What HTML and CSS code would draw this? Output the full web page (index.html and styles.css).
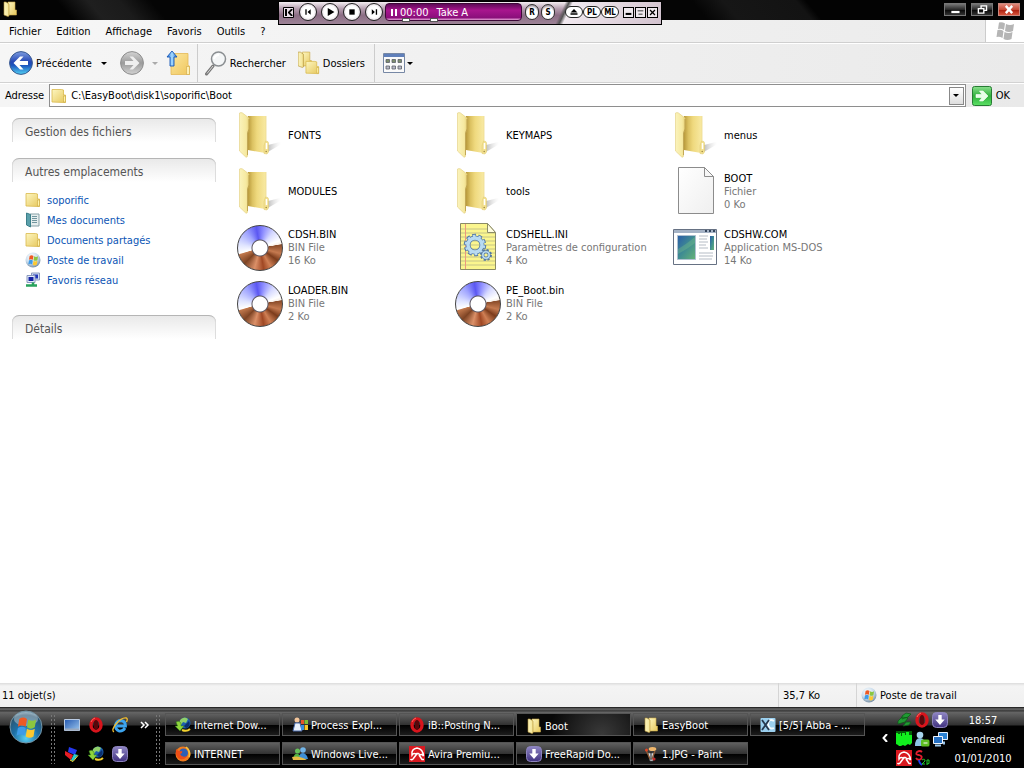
FILE: index.html
```html
<!DOCTYPE html>
<html lang="fr">
<head>
<meta charset="utf-8">
<title>Boot</title>
<link rel="stylesheet" href="styles.css">
</head>
<body>
<svg class="defs" aria-hidden="true">
  <defs>
    <linearGradient id="gFold" x1="0" y1="0" x2="1" y2="1"><stop offset="0" stop-color="#fdf6c0"/><stop offset="1" stop-color="#e6c75c"/></linearGradient>
    <linearGradient id="gFlap" x1="0" y1="0" x2="1" y2="0"><stop offset="0" stop-color="#fbf3bc"/><stop offset=".7" stop-color="#f6e9a0"/><stop offset="1" stop-color="#e8d27a"/></linearGradient>
    <linearGradient id="gBack" x1="0" y1="0" x2="1" y2="0"><stop offset="0" stop-color="#b99a3c"/><stop offset=".25" stop-color="#dcc262"/><stop offset=".5" stop-color="#efd97e"/><stop offset="1" stop-color="#f8eaa4"/></linearGradient>
    <linearGradient id="gShade" x1="0" y1="0" x2="1" y2="0"><stop offset="0" stop-color="#777" stop-opacity=".6"/><stop offset="1" stop-color="#ccc" stop-opacity="0"/></linearGradient>
    <linearGradient id="gBlue" x1="0" y1="0" x2="0" y2="1"><stop offset="0" stop-color="#7d9ce0"/><stop offset=".45" stop-color="#2447b4"/><stop offset=".6" stop-color="#1c55bd"/><stop offset="1" stop-color="#52d2f4"/></linearGradient>
    <linearGradient id="gGrey" x1="0" y1="0" x2="0" y2="1"><stop offset="0" stop-color="#d4d4d4"/><stop offset=".5" stop-color="#9b9b9b"/><stop offset="1" stop-color="#d2d2d2"/></linearGradient>
    <linearGradient id="gUp" x1="0" y1="0" x2="1" y2="0"><stop offset="0" stop-color="#1f6fd8"/><stop offset=".5" stop-color="#a8dcff"/><stop offset="1" stop-color="#1f6fd8"/></linearGradient>
    <linearGradient id="gUpFold" x1="0" y1="0" x2="1" y2="1"><stop offset="0" stop-color="#fbe7a0"/><stop offset="1" stop-color="#f0c65c"/></linearGradient>
    <linearGradient id="gApp" x1="0" y1="0" x2="1" y2="1"><stop offset="0" stop-color="#2a5ca8"/><stop offset=".5" stop-color="#3f8c92"/><stop offset="1" stop-color="#66b476"/></linearGradient>
    <linearGradient id="gPage" x1="0" y1="0" x2="1" y2="1"><stop offset="0" stop-color="#fff"/><stop offset="1" stop-color="#efefef"/></linearGradient>
    <linearGradient id="gGo" x1="0" y1="0" x2="0" y2="1"><stop offset="0" stop-color="#8be08e"/><stop offset=".5" stop-color="#2fb03c"/><stop offset="1" stop-color="#5ce065"/></linearGradient>
    <radialGradient id="gOrb" cx=".5" cy=".85" r=".9"><stop offset="0" stop-color="#5ad0f2"/><stop offset=".45" stop-color="#1d6fa6"/><stop offset=".8" stop-color="#2b5570"/><stop offset="1" stop-color="#9fc4d8"/></radialGradient>
    <radialGradient id="gPearl" cx=".4" cy=".3" r=".7"><stop offset="0" stop-color="#fff"/><stop offset=".6" stop-color="#c9dcec"/><stop offset="1" stop-color="#7c93a8"/></radialGradient>
    <linearGradient id="gPurple" x1="0" y1="0" x2="0" y2="1"><stop offset="0" stop-color="#8f86c4"/><stop offset="1" stop-color="#403280"/></linearGradient>
    <linearGradient id="gDesk" x1="0" y1="0" x2="1" y2="1"><stop offset="0" stop-color="#2458b0"/><stop offset="1" stop-color="#9cc7ee"/></linearGradient>
  </defs>
  <symbol id="folder-big" viewBox="0 0 48 48">
    <path d="M30 42 44 34q2-2 0-3L32 34z" fill="url(#gShade)"/>
    <path d="M12 5h18v26l-1 11-17-3z" fill="url(#gBack)"/>
    <path d="M30 5v25" stroke="#ecd98d" stroke-width=".8"/>
    <path d="M29.500 30q3 0 3 2v9l-1.500 2-3-.5v-8z" fill="#f3e190" stroke="#dcc66d" stroke-width=".5"/>
    <path d="M30.500 32v6" stroke="#fff" stroke-width="1.500"/>
    <circle cx="30.200" cy="40.500" r=".8" fill="#a08b45"/>
    <path d="M3.500 2q1.500-.8 3 0L13 7v11l-1.500 4v23q-.5 2-2 .8L3.500 40z" fill="url(#gFlap)" stroke="#e2cd7c" stroke-width=".6"/>
    <path d="M13 8v10l-1.500 4v22" fill="none" stroke="#b89b45" stroke-width=".8"/>
  </symbol>
  <symbol id="folder" viewBox="0 0 16 16">
    <path d="M1 1.500h9.500l2 .5v5h2v7.500H13L1 14z" fill="url(#gFold)" stroke="#d9b94d" stroke-width=".8"/>
    <path d="M12.500 8h2v6h-2z" fill="#fff3a8" stroke="#c9a63c" stroke-width=".6"/>
  </symbol>
  <symbol id="folder-open" viewBox="0 0 16 16">
    <path d="M6 1h7v8h1.500v5H6z" fill="url(#gFold)" stroke="#c9a848" stroke-width=".6"/>
    <path d="M2 1h2l3 2v12l-1 .5L2 14z" fill="url(#gFlap)" stroke="#b6963b" stroke-width=".6"/>
  </symbol>
  <symbol id="flag" viewBox="0 0 20 20">
    <path d="M4 3q3-2 6 0L9 9q-3-2-6 0z" fill="#ee5a24"/><path d="M11 3.500q3 2 6 0L16 9.500q-3 2-6 0z" fill="#8cc63f"/>
    <path d="M3 10q3-2 6 0l-1 6q-3-2-6 0z" fill="#3e9be8"/><path d="M10 10.500q3 2 6 0l-1 6q-3 2-6 0z" fill="#fdc82f"/>
  </symbol>
  <symbol id="computer" viewBox="0 0 16 16"><circle cx="8" cy="8" r="7.500" fill="url(#gPearl)"/><use href="#flag" x="2" y="2" width="13" height="13"/></symbol>
  <symbol id="opera" viewBox="0 0 16 16"><ellipse cx="8" cy="8" rx="5" ry="6" fill="none" stroke="#d8141c" stroke-width="3.400"/><ellipse cx="8" cy="8" rx="2.300" ry="5" fill="#5a060a"/><path d="M3 5q1-3 4-4" stroke="#ff6a60" fill="none"/></symbol>
  <symbol id="down" viewBox="0 0 16 16"><rect x=".5" y=".5" width="15" height="15" rx="4" fill="url(#gPurple)" stroke="#8d84bd"/><path d="M6.300 3h3.400v4.500h3L8 13 3.300 7.500h3z" fill="#fff"/></symbol>
  <symbol id="globe" viewBox="0 0 16 16"><circle cx="10" cy="6" r="5.500" fill="#1c5fae"/><path d="M6 2q4-3 7 0l-2 4-3-1-2 3q-3-3 0-6z" fill="#8fd06a"/><path d="M14 4q2 4-2 7-2 0-3-2z" fill="#0b2f6d"/><path d="M1 5q3-2 5 1v3h3l-4 5-5-5h2.500z" fill="#8ed43c" stroke="#2c7a18" stroke-width=".5"/><path d="M7 13q5 2 8-1" stroke="#f5d32f" stroke-width="2" fill="none"/></symbol>
  <symbol id="avira" viewBox="0 0 16 16"><path d="M0 0h16v16H0z" fill="#d91920"/><path d="M3 9Q2 3 8 2q6 1 6.500 8-1.500-2.500-3.500-1Q9.500 6.500 7 8 4.500 6.500 3 9z" fill="none" stroke="#fff" stroke-width="1.500"/><path d="M8.500 7 4 13q-1.500 1.500-2.500 0M10 9l3 4.500h2" stroke="#fff" stroke-width="1.500" fill="none"/></symbol>
  <symbol id="net" viewBox="0 0 16 16"><path d="M6.500 1h8v7h-8z" fill="#cfdcf4" stroke="#8a99bd"/><path d="M8 2.500h5v4H8z" fill="#2136b8"/><path d="M2 3.500h8v7H2z" fill="#e3ebfb" stroke="#8a99bd"/><path d="M3.500 5h5v4h-5z" fill="#1422a4"/><path d="M8 10.500V14M1 13.500h11" stroke="#28a35c" stroke-width="2.500"/></symbol>
</svg>

<header class="titlebar">
  <svg class="i16" aria-hidden="true"><use href="#folder-open"/></svg>
  <div class="winbtns">
    <button aria-label="Réduire"><svg viewBox="0 0 22 13"><path d="M7 8h9v2.500H7z" fill="#fff"/></svg></button>
    <button aria-label="Restaurer"><svg viewBox="0 0 22 13" fill="none" stroke="#fff" stroke-width="1.500"><path d="M7 5.500h6v5H7zM10 5V2.500h6v5h-3"/></svg></button>
    <button class="close" aria-label="Fermer"><svg viewBox="0 0 22 13" stroke="#fff" stroke-width="2.600"><path d="m7.500 2.500 7 8m0-8-7 8"/></svg></button>
  </div>
</header>

<section class="player" aria-label="Lecteur">
  <button class="pk" aria-label="Menu"><svg viewBox="0 0 11 11"><path d="M.5.500h10v10H.5z" fill="#eadfe8" stroke="#000"/><path d="M2 2h2v7H2zM5 5l3-3h1.500v1L7 5.500 9.500 8v1H8L5 6z"/></svg></button>
  <button class="round" aria-label="Précédent"><svg viewBox="0 0 18 18"><path d="M6 6h1.500v6H6zM12 6v6L8.500 9z"/></svg></button>
  <button class="round" aria-label="Lecture"><svg viewBox="0 0 18 18"><path d="M6.500 4.500v9L14 9z"/></svg></button>
  <button class="round" aria-label="Arrêt"><svg viewBox="0 0 18 18"><path d="M6 6h6v6H6z"/></svg></button>
  <button class="round" aria-label="Suivant"><svg viewBox="0 0 18 18"><path d="M11 6h1.500v6H11zM6.500 6v6L10 9z"/></svg></button>
  <div class="lcd"><svg viewBox="0 0 8 7" width="8" height="7"><path d="M1 0h2v7H1zM5 0h2v7H5z" fill="#fff"/></svg><span>00:00</span><span class="track">Take A</span><i class="thumb t1"></i><i class="thumb t2"></i></div>
  <button class="knob">R</button><button class="knob">S</button>
  <div class="pills"><button aria-label="Éjecter"><svg viewBox="0 0 16 11"><path d="m8 2 4 4H4zM4 7h8v1.500H4z"/></svg></button><button>PL</button><button>ML</button></div>
  <div class="pwin"><button aria-label="Réduire"><svg viewBox="0 0 11 11"><path d="M2 6h7v2.500H2z"/></svg></button><button aria-label="Barre"><svg viewBox="0 0 11 11"><path d="M2 3h7v1H2zM3 7h5v1H3z"/></svg></button><button aria-label="Fermer"><svg viewBox="0 0 11 11" stroke="#000" stroke-width="1.500"><path d="m2.500 2.500 6 6m0-6-6 6"/></svg></button></div>
</section>

<nav class="menubar">
  <button>Fichier</button><button>Edition</button><button>Affichage</button><button>Favoris</button><button>Outils</button><button>?</button>
  <div class="brand"><svg viewBox="0 0 20 20" width="20" height="20" aria-hidden="true"><g fill="#b5b5b5"><path d="M4 1.500q3-1 6 1L9 9q-3-2-6-1z"/><path d="M11 3q4 2 8 0l-1 7q-4 2-8 0z"/><path d="M2.500 9q3-1 6 1l-1 7q-3-2-6-1z"/><path d="M9.500 11q4 2 8 0l-1 7q-4 2-8 0z"/></g></svg></div>
</nav>

<div class="toolbar">
  <button class="tb back"><svg width="24" height="24" viewBox="0 0 24 24"><circle cx="12" cy="12" r="11.400" fill="url(#gBlue)" stroke="#37588f"/><path d="m4.500 12 6.500-6.500h3.500L10.500 10H19v4h-8.500l4 4.500H11z" fill="#fff"/></svg>Précédente<i class="caret"></i></button>
  <button class="tb fwd" aria-label="Suivante"><svg width="24" height="24" viewBox="0 0 24 24"><circle cx="12" cy="12" r="11.400" fill="url(#gGrey)" stroke="#8d8d8d"/><path d="M19.500 12 13 5.500H9.500l4 4.500H5v4h8.500l-4 4.500H13z" fill="#efefef"/></svg><i class="caret dim"></i></button>
  <button class="tb up" aria-label="Dossier parent"><svg width="26" height="26" viewBox="0 0 26 26"><path d="M5 3.500h17v11l1.500 2v8H5z" fill="url(#gUpFold)" stroke="#e5b955" stroke-width=".8"/><path d="M20.500 16.500h3v8h-3z" fill="#fff0b4" stroke="#cfa645" stroke-width=".6"/><path d="M6 1 1 7h3v9h4V7h3z" fill="url(#gUp)" stroke="#1556b5" stroke-width=".9"/></svg></button>
  <button class="tb search"><svg width="22" height="25" viewBox="0 0 22 25"><path d="m8 15-6.500 8" stroke="#777" stroke-width="3" stroke-linecap="round"/><path d="m8 15-6 7.500" stroke="#d8d8d8"/><circle cx="13.500" cy="8" r="7" fill="#f4f6f7" stroke="#8b8f92" stroke-width="1.500"/><path d="M9 8q1-4 5-4" fill="none" stroke="#fff" stroke-width="2"/></svg>Rechercher</button>
  <button class="tb dirs"><svg width="22" height="25" viewBox="0 0 22 25"><use href="#folder-open" x="-2" y="0" width="17" height="17"/><use href="#folder" x="7" y="9" width="15" height="15"/></svg>Dossiers</button>
  <button class="tb views" aria-label="Affichages"><svg width="22" height="20" viewBox="0 0 22 20"><path d="M.5.500h21v19H.5z" fill="#fafafa" stroke="#7788a5"/><path d="M1 1h20v3H1z" fill="#5f7fba"/><g fill="#7d8d6d" stroke="#5a5f68" stroke-width=".8"><path d="M3 6.500h3.500v3H3zM9 6.500h3.500v3H9zM15 6.500h3.500v3H15z"/><path d="M3 13h3.500v3H3zM9 13h3.500v3H9zM15 13h3.500v3H15z" fill="#b9b9c9"/></g></svg><i class="caret"></i></button>
</div>

<form class="address">
  <label for="path">Adresse</label>
  <div class="combo"><svg class="i16" aria-hidden="true"><use href="#folder"/></svg><input id="path" value="C:\EasyBoot\disk1\soporific\Boot"><button type="button" aria-label="Dérouler"><i class="caret"></i></button></div>
  <button type="button" class="go"><svg width="20" height="20" viewBox="0 0 20 20"><rect x=".5" y=".5" width="19" height="19" rx="2" fill="url(#gGo)" stroke="#267c33"/><path d="M4 8.500h6l-2.500-3.500H11l5 5-5 5H7.500L10 11.500H4z" fill="#e6ffe8" stroke="#fff" stroke-width=".6"/></svg>OK</button>
</form>

<main class="content">
  <aside class="side">
    <section><h2>Gestion des fichiers</h2></section>
    <section class="places"><h2>Autres emplacements</h2>
      <ul>
        <li><a href="#"><svg class="i16"><use href="#folder"/></svg>soporific</a></li>
        <li><a href="#"><svg class="i16" viewBox="0 0 16 16"><path d="M5 2h9v12H5z" fill="#e6eeee" stroke="#86a0a6"/><path d="M7 4.500h5M7 6.500h5M7 8.500h5M7 10.500h5" stroke="#71959e"/><path d="m1.500 1 4 1.500V15l-4-2z" fill="#5aa0ab" stroke="#3c7f8a"/></svg>Mes documents</a></li>
        <li><a href="#"><svg class="i16"><use href="#folder"/></svg>Documents partagés</a></li>
        <li><a href="#"><svg class="i16"><use href="#computer"/></svg>Poste de travail</a></li>
        <li><a href="#"><svg class="i16"><use href="#net"/></svg>Favoris réseau</a></li>
      </ul>
    </section>
    <section><h2>Détails</h2></section>
  </aside>
  <ul class="files">
    <li><svg class="i48"><use href="#folder-big"/></svg><p><b>FONTS</b></p></li>
    <li><svg class="i48"><use href="#folder-big"/></svg><p><b>KEYMAPS</b></p></li>
    <li><svg class="i48"><use href="#folder-big"/></svg><p><b>menus</b></p></li>
    <li><svg class="i48"><use href="#folder-big"/></svg><p><b>MODULES</b></p></li>
    <li><svg class="i48"><use href="#folder-big"/></svg><p><b>tools</b></p></li>
    <li><svg class="i48" viewBox="-2 0 48 48"><path d="M4.500.500h26l9 9v37h-35z" fill="url(#gPage)" stroke="#8c8c8c"/><path d="M30.500.500v9h9z" fill="#f7f7f7" stroke="#8c8c8c"/></svg><p><b>BOOT</b>Fichier<br>0 Ko</p></li>
    <li><span class="disc"></span><p><b>CDSH.BIN</b>BIN File<br>16 Ko</p></li>
    <li><svg class="i48" viewBox="-2 0 48 48"><path d="M4.500.500h27l8 9v37h-35z" fill="#fbf68e" stroke="#8b8b66"/><path d="M5 6h26M5 10h34M5 14h34M5 18h34M5 22h34M5 26h34M5 30h34M5 34h34M5 38h34M5 42h34" stroke="#c6c487"/><path d="M9.500 1v45" stroke="#ec9a7d"/><path d="M31.500.500v9h8z" fill="#fffde0" stroke="#8b8b66"/><g fill="none"><circle cx="19" cy="22" r="9" stroke="#5479a4" stroke-width="4.500" stroke-dasharray="3.500 2.150"/><circle cx="19" cy="22" r="7" stroke="#5479a4" stroke-width="5"/><circle cx="19" cy="22" r="7" stroke="#b9dbf2" stroke-width="3.400"/><circle cx="19" cy="22" r="9" stroke="#b9dbf2" stroke-width="2.500" stroke-dasharray="2.500 3.150" stroke-dashoffset="-.5"/><circle cx="30" cy="32" r="4.500" stroke="#5479a4" stroke-width="3" stroke-dasharray="2 1.530"/><circle cx="30" cy="32" r="3.200" stroke="#5479a4" stroke-width="3"/><circle cx="30" cy="32" r="3.200" stroke="#b9dbf2" stroke-width="1.600"/></g></svg><p><b>CDSHELL.INI</b>Paramètres de configuration<br>4 Ko</p></li>
    <li><svg class="i48" viewBox="-2 0 48 48"><path d="M-.5 6.500h43v35h-43z" fill="#fff" stroke="#667183"/><path d="M0 7h42v3H0z" fill="#a5b3c6"/><path d="M31 8h2m2 0h2m2 0h2" stroke="#33445c" stroke-width="2"/><path d="M3.500 12.500h18v24h-18z" fill="url(#gApp)" stroke="#afc1d1"/><path d="M4 26q7-4 17-12v6Q12 27 4 31z" fill="#7bc28a" opacity=".35"/><path d="M25 13h9M25 16h8M25 19h9M25 22h7M25 25h9M25 30h14M25 33h14M25 36h13" stroke="#b5bcc5"/><path d="M36 13h4v14h-4z" fill="url(#gApp)"/></svg><p><b>CDSHW.COM</b>Application MS-DOS<br>14 Ko</p></li>
    <li><span class="disc"></span><p><b>LOADER.BIN</b>BIN File<br>2 Ko</p></li>
    <li><span class="disc"></span><p><b>PE_Boot.bin</b>BIN File<br>2 Ko</p></li>
  </ul>
</main>

<footer class="status"><span class="count">11 objet(s)</span><span class="size">35,7 Ko</span><span class="zone"><svg class="i16"><use href="#computer"/></svg>Poste de travail</span></footer>

<div class="taskbar">
  <button class="start" aria-label="Démarrer"><svg width="34" height="34" viewBox="0 0 34 34"><circle cx="17" cy="17" r="16" fill="url(#gOrb)" stroke="#7494a5"/><ellipse cx="17" cy="9" rx="12" ry="7" fill="#fff" opacity=".35"/><use href="#flag" x="5" y="5" width="26" height="26"/></svg></button>
  <i class="grip"></i>
  <div class="quick">
    <button aria-label="Bureau"><svg class="i16" viewBox="0 0 16 16"><path d="M.5 2.500h15v11H.5z" fill="url(#gDesk)" stroke="#b9cbe4"/><path d="M1 11.500h14v2H1z" fill="#9aa8bc"/></svg></button>
    <button aria-label="Opera"><svg class="i16"><use href="#opera"/></svg></button>
    <button aria-label="Internet Explorer"><svg class="i16" viewBox="0 0 16 16" fill="none"><path d="M13 11q-2 3.500-6 3-4-1.500-3.500-6 1-4.500 5.500-4.500 4.500.5 4.500 5.500H5" stroke="#3ca4ee" stroke-width="2.800"/><path d="M2 15q-3-2 2-8Q10 0 14.500 1q1.500 1 0 4" stroke="#f3bd2d" stroke-width="1.300"/></svg></button>
    <button class="more" aria-label="Plus"><svg width="10" height="8" viewBox="0 0 10 8"><path d="m1 1 3 3-3 3m4-6 3 3-3 3" fill="none" stroke="#fff" stroke-width="1.500"/></svg></button>
    <button aria-label="Livres"><svg class="i16" viewBox="0 0 16 16"><path d="m5 1 8 3-2 5-7-3z" fill="#2437ef"/><path d="m1 5 8 4-2 5-6-5z" fill="#e51c25"/><path d="m10 8 4 1-5 6-2-1z" fill="#29cbd0"/><path d="m6 14 3 1.500 5-6" stroke="#f5df38" fill="none"/></svg></button>
    <button aria-label="Téléchargements"><svg class="i16"><use href="#globe"/></svg></button>
    <button aria-label="FreeRapid"><svg class="i16"><use href="#down"/></svg></button>
  </div>
  <i class="grip"></i>
  <div class="tasks">
    <button><svg class="i16"><use href="#globe"/></svg><span>Internet Dow...</span></button>
    <button><svg class="i16" viewBox="0 0 16 16"><circle cx="5" cy="3" r="2.500" fill="#f4c69b"/><path d="M1 14 3 6h5l2 8z" fill="#e9f0fa" stroke="#4868a8"/><path d="M9 3h3v4H9z" fill="#e8542a"/><path d="M12.500 3H16v4h-3.500z" fill="#7dbf35"/><path d="M9 8h3v5H9z" fill="#398fe0"/><path d="M12.500 8H16v5h-3.500z" fill="#f7c62b"/></svg><span>Process Expl...</span></button>
    <button><svg class="i16"><use href="#opera"/></svg><span>iB::Posting N...</span></button>
    <button class="active" aria-pressed="true"><svg class="i16"><use href="#folder-open"/></svg><span>Boot</span></button>
    <button><svg class="i16"><use href="#folder-open"/></svg><span>EasyBoot</span></button>
    <button><svg class="i16" viewBox="0 0 16 16"><rect x=".5" y="1" width="15" height="14" rx="1" fill="#9bd0ef"/><path d="M14 4q-5-3-6 3 1 6 6 4" fill="none" stroke="#f4fbff" stroke-width="1.800"/><path d="m2 3 7 10M9 3 2 13" stroke="#26384e" stroke-width="1.800"/></svg><span>[5/5] Abba - ...</span></button>
    <button><svg class="i16" viewBox="0 0 16 16"><circle cx="8" cy="8" r="7.500" fill="#f17a1d"/><circle cx="8.500" cy="7" r="4.500" fill="#2d5fb5"/><path d="M1 3q3 3 6 2 1 2-2 3 2 4 7 2-2 4-7 3Q0 11 1 3z" fill="#ee4d16"/><path d="M11 1q5 4 3 10" fill="none" stroke="#fbc33a" stroke-width="1.600"/></svg><span>INTERNET</span></button>
    <button><svg class="i16" viewBox="0 0 16 16"><circle cx="5.500" cy="5" r="2.500" fill="#66c05a"/><circle cx="11" cy="4" r="2.800" fill="#72b5e9"/><path d="M1 13q1-6 5-5 3 1 3 5z" fill="#52b143"/><path d="M7 13q0-6 4-6 4 1 5 6z" fill="#3f8fd5"/><path d="M0 11q7-2 15 3H1z" fill="#e5bb45"/></svg><span>Windows Live...</span></button>
    <button><svg class="i16"><use href="#avira"/></svg><span>Avira Premiu...</span></button>
    <button><svg class="i16"><use href="#down"/></svg><span>FreeRapid Do...</span></button>
    <button><svg class="i16" viewBox="0 0 16 16"><path d="m5 7 2 8h3l1-8z" fill="#d7dee4" stroke="#555" stroke-width=".6"/><path d="M3 4 7 13M12 5l-3 8" stroke="#8f5a34" stroke-width="1.300"/><path d="M8 6v8" stroke="#222"/><circle cx="3.500" cy="4" r="1.500" fill="#e24727"/><ellipse cx="9.500" cy="3" rx="3.800" ry="2" fill="#efb76c"/><circle cx="11" cy="13" r="1.600" fill="#c42b2b"/></svg><span>1.JPG - Paint</span></button>
  </div>
  <div class="tray">
    <button class="fold" aria-label="Masquer"><svg width="6" height="8" viewBox="0 0 6 8"><path d="M5 0 1.500 4 5 8" fill="none" stroke="#fff" stroke-width="2"/></svg></button>
    <div class="trayicons">
      <svg class="i16" viewBox="0 0 16 16"><path d="m6 4 4-3 5 1-3 3-6 2zM2 9l4-4 6 1-3 4-7 2zM7 14l3-4 5 0-2 3z" fill="#209a32" stroke="#0a5716" stroke-width=".7"/></svg>
      <svg class="i16"><use href="#opera"/></svg>
      <svg class="i16"><use href="#down"/></svg>
      <svg class="i16" viewBox="0 0 16 16"><path d="M0 0h16v16H0z" fill="#035d08"/><path d="M0 2h2v1h2v-1h1v3h1V2h3v2h1V1h3v3h3v12H0z" fill="#11f01e"/><path d="m0 13 2 1 1 1h2l2-1 2 1 3-2 2 1 2-2v4H0z" fill="#000"/></svg>
      <svg class="i16" viewBox="0 0 16 16"><circle cx="6" cy="4" r="3.300" fill="#a8d4ed"/><path d="M1 15q0-8 5-8t5 8z" fill="#8bc4e4"/><rect x="7" y="8.500" width="8.500" height="7" rx="1.500" fill="#5dbd21"/><path d="M9.500 12h4" stroke="#fff"/></svg>
      <svg class="i16" viewBox="0 0 16 16"><path d="M6.500 1.500h9v7h-9z" fill="#2b82d4" stroke="#e4efff"/><path d="M1.500 5.500h9v7h-9z" fill="#256fc2" stroke="#f2f7ff"/><path d="M3 14.500h6m3-4v3" stroke="#9bc7ec" stroke-width="2"/></svg>
      <svg class="i16"><use href="#avira"/></svg>
      <svg class="i16" viewBox="0 0 16 16" fill="none"><path d="M8 2Q6 0 3 2q-2 3 2 3 4 1 2 4-3 2-5-1" stroke="#e31e2e" stroke-width="1.800"/><path d="M5 10q0 3 3 5" stroke="#1f3cf0" stroke-width="1.800"/><path d="M8 10q3-2 3 1l-3 3h3m2 1v-5q3-1 2 2 1 2-2 2" stroke="#22d02b"/></svg>
    </div>
    <div class="clock"><time>18:57</time><span>vendredi</span><span>01/01/2010</span></div>
  </div>
</div>
</body>
</html>
```
FILE: styles.css
```css
* { box-sizing: border-box; }
body {
  margin: 0;
  min-height: 100vh;
  display: flex;
  flex-direction: column;
  background: #fff;
  color: #000;
  font: 11px/13px "DejaVu Sans Condensed", Tahoma, "Noto Sans", sans-serif;
}
button, input { font: inherit; color: inherit; border: 0; padding: 0; margin: 0; background: none; }
button { display: flex; align-items: center; white-space: nowrap; }
svg { display: block; flex: none; }
ul, p, h2 { margin: 0; padding: 0; list-style: none; }
.defs { position: absolute; width: 0; height: 0; }
.i16 { width: 16px; height: 16px; }
.i48 { width: 48px; height: 48px; overflow: visible; }
.caret { border: 3px solid transparent; border-top-color: #000; border-bottom: 0; width: 0; height: 0; }
.dim { border-top-color: #aaa; }

.titlebar {
  height: 20px;
  display: flex;
  justify-content: space-between;
  padding: 1px 4px 0 2px;
  background: linear-gradient(50deg, #030303 7%, #1f1f1f 10%, #1b1b1b 13%, #050505 16%, #050505 68%, #161616 71%, #131313 78%, #030303 79%);
}
.winbtns { display: flex; gap: 5px; padding-top: 2px; }
.winbtns button { width: 22px; height: 13px; border: 1px solid #777; background: linear-gradient(#777, #2b2b2b 50%, #050505 51%, #333); }
.winbtns .close { border-color: #c98a80; background: linear-gradient(#e08a7c, #c84c38 50%, #a81c0c 51%, #d8553c); }
.winbtns svg { width: 20px; height: 13px; }

.player {
  position: absolute;
  left: 50%;
  top: 1px;
  transform: translateX(-234px);
  display: flex;
  align-items: center;
  width: 384px;
  height: 24px;
  padding: 0 0 2px 4px;
  border: 1px solid #000;
  background:
    linear-gradient(115deg, transparent 73%, #555 74%, #f1e9ef 75%, #d2c2ce),
    linear-gradient(#f4eef2, #b7a0b1 30%, #8b6d84 60%, #9d8397);
}
.player .pk, .player .pk svg { width: 11px; height: 11px; }
.pk { margin-right: 5px; }
.round { width: 18px; height: 18px; margin-right: 4px; border: 1px solid #222; border-radius: 50%; background: radial-gradient(#fff 50%, #c9b7c5); }
.round svg { width: 16px; height: 16px; }
.lcd {
  position: relative;
  display: flex;
  align-items: center;
  gap: 2px;
  width: 137px;
  height: 18px;
  margin-left: -2px;
  padding: 0 4px;
  border: 1px solid #3d0837;
  border-radius: 4px;
  color: #fff;
  background: linear-gradient(#5f0b57, #a8158e 40%, #8b0f7b 85%, #e9a5da);
}
.track { margin-left: 6px; }
.thumb { position: absolute; bottom: -2px; width: 8px; height: 4px; background: #fff; border: 1px solid #555; }
.t1 { left: 16px; }
.t2 { left: 44px; }
.knob { width: 14px; height: 16px; margin-left: 3px; justify-content: center; border: 1px solid #333; border-radius: 8px; font-size: 8px; font-weight: bold; background: radial-gradient(circle at 50% 60%, #fff 50%, #5f4a5a); }
.knob + .knob { margin-left: 2px; }
.pills { display: flex; margin-left: 10px; }
.pills button { width: 18px; height: 12px; justify-content: center; border: 1px solid #222; border-radius: 6px; background: #fff; font-size: 8px; font-weight: bold; }
.pills svg { width: 14px; height: 10px; }
.pwin { display: flex; gap: 1px; margin-left: 4px; }
.pwin button { width: 11px; height: 11px; border: 1px solid #000; background: #efe8ee; }
.pwin svg { width: 9px; height: 9px; }

.menubar { display: flex; align-items: center; gap: 15px; height: 23px; padding-left: 9px; background: linear-gradient(90deg, #f7f7f7, #ebebeb); border-bottom: 1px solid #cfcfcf; }
.brand { align-self: stretch; display: flex; align-items: center; justify-content: center; width: 39px; margin-left: auto; background: #fff; border-left: 1px solid #ccc; }

.toolbar { display: flex; align-items: center; height: 40px; padding-left: 9px; background: linear-gradient(90deg, #f6f6f6, #eaeaea); border-top: 1px solid #fff; border-bottom: 1px solid #d2d2d2; }
.tb { height: 38px; gap: 3px; }
.back .caret { margin-left: 6px; }
.fwd { gap: 8px; margin-left: 13px; }
.up { margin-left: 8px; padding-right: 5px; border-right: 1px solid #ccc; }
.search { margin-left: 7px; }
.dirs { margin-left: 12px; padding-right: 9px; border-right: 1px solid #ccc; }
.views { margin-left: 8px; gap: 2px; }

.address { display: flex; align-items: center; height: 24px; padding-left: 5px; background: linear-gradient(90deg, #f5f5f5, #e9e9e9); border-top: 1px solid #fff; }
.combo { flex: 1; display: flex; align-items: center; height: 23px; margin-left: 5px; padding-left: 1px; background: #fff; border: 1px solid #8e8e8e; }
.combo input { flex: 1; min-width: 0; padding-left: 4px; outline: 0; }
.combo button { width: 15px; height: 18px; margin-right: 1px; justify-content: center; border: 1px solid #888; background: linear-gradient(#fff, #dedede); }
.go { gap: 4px; margin: 0 14px 0 6px; }

.content { flex: 1; display: flex; }
.side { width: 204px; margin: 11px 0 0 12px; }
.side section { margin-bottom: 16px; }
.side h2 {
  height: 24px;
  padding: 0 13px;
  border-top: 1px solid #b5b5b5;
  border-radius: 7px 7px 0 0;
  box-shadow: inset 1px 0 #ddd, inset -1px 0 #ddd;
  background: linear-gradient(#e9e9e9, #fff);
  color: #555;
  font-size: 12px;
  font-weight: normal;
  line-height: 26px;
}
.side .places { margin-bottom: 25px; }
.places ul { padding: 8px 0 0 13px; }
.places li { height: 20px; }
.places a { display: flex; align-items: center; gap: 6px; height: 20px; color: #0b55b5; text-decoration: none; }
.files { display: grid; grid-template-columns: repeat(auto-fill, 218px); grid-auto-rows: 56px; align-content: start; flex: 1; margin-left: 20px; }
.files li { display: flex; align-items: center; white-space: nowrap; color: #777; }
.files p { margin-left: 4px; }
.files b { display: block; font-weight: normal; color: #000; }
.disc {
  width: 46px;
  height: 46px;
  margin: 2px 1px 0;
  border: 1px solid #444;
  border-radius: 50%;
  background:
    radial-gradient(circle, #fff 7px, #5a5560 8px, transparent 9px),
    conic-gradient(from -10deg, #5b57f2, #8c8cff 20deg, #d6d9ff 50deg, #fff 80deg, #f8efe8 89deg, #8a4c2a 91deg, #c57a50 115deg, #7c3c1c 135deg, #d08055 160deg, #a04824 180deg, #db9068 205deg, #7e4424 235deg, #c0774c 262deg, #fff 265deg, #dfe4ff 290deg, #9ea3ff 330deg, #5b57f2);
}

.status { display: flex; height: 24px; margin-top: auto; background: linear-gradient(#dcdcdc, #f4f4f4 3px, #f0f0f0); line-height: 25px; }
.count { flex: 1; padding-left: 2px; }
.size { width: 78px; padding-left: 4px; border-left: 1px solid #d5d5d5; }
.zone { display: flex; align-items: center; gap: 3px; width: 168px; padding-left: 4px; border-left: 1px solid #d5d5d5; }

.taskbar {
  display: flex;
  height: 61px;
  color: #fff;
  background: linear-gradient(#111 0, #6c6c6c 2px, #333 4px, #666 5px, #303030 18px, #000 19px);
}
.taskbar button { color: #fff; }
.start { width: 43px; height: 34px; margin: 3px 7px 0 0; padding-left: 9px; }
.grip { width: 5px; height: 50px; margin-top: 7px; background: radial-gradient(circle, #777 1px, transparent 1px) 0 0 / 3px 4px; }
.quick { display: grid; grid-template-columns: 16px 16px 16px 10px; grid-auto-rows: 16px; gap: 13px 8px; align-content: start; padding: 10px 9px 0 9px; }
.quick .more { margin-left: 4px; }
.tasks { flex: 1; display: grid; grid-template-columns: repeat(6, minmax(0, 115px)); grid-auto-rows: 23px; gap: 6px 2px; align-content: start; padding: 6px 0 0 5px; text-shadow: 1px 1px #000; }
.tasks button { gap: 3px; padding: 1px 0 0 9px; border: 1px solid #555; background: linear-gradient(#606060, #333 50%, #000 52%, #1c1c1c); overflow: hidden; }
.tasks .active { padding-top: 3px; background: radial-gradient(circle at 75% 100%, #3a3a3a, #080808 60%); }
.tray { display: flex; }
.fold { align-self: center; margin-right: 8px; }
.trayicons { display: grid; grid-template-columns: repeat(3, 16px); gap: 3px 2px; align-content: start; padding-top: 5px; }
.clock { display: flex; flex-direction: column; align-items: center; width: 76px; line-height: 19px; padding-top: 4px; padding-right: 6px; }
```
